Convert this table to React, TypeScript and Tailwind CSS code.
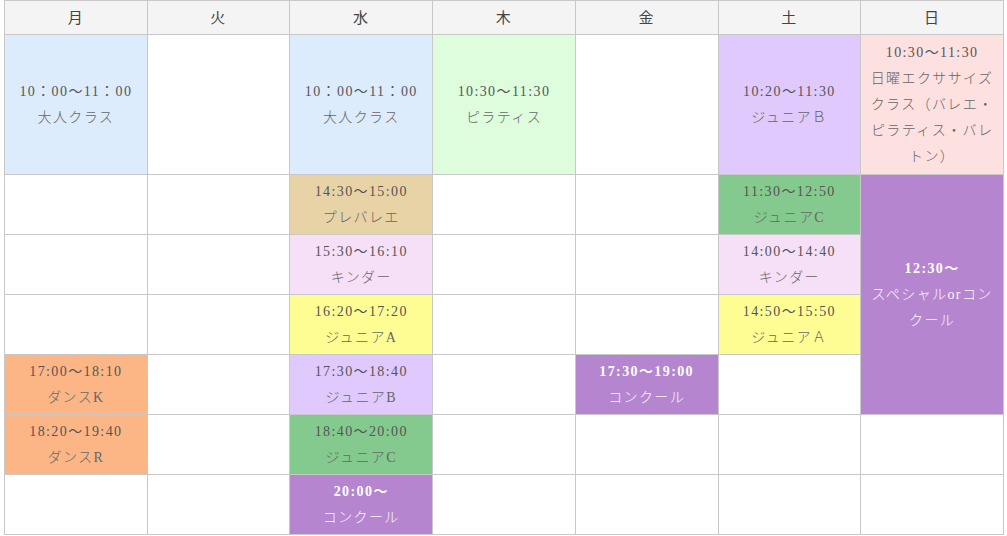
import React from "react";

type Cell = {
  time?: string;
  name?: string;
  bg?: string;
  dark?: boolean;
  rowSpan?: number;
  skip?: boolean;
};

const days = ["月", "火", "水", "木", "金", "土", "日"];

const blue = "bg-[#dcecfc]";
const mint = "bg-[#ddfddd]";
const lavender = "bg-[#e0c9fd]";
const rose = "bg-[#fde0e0]";
const tan = "bg-[#e8d3a6]";
const pink = "bg-[#f6e0f8]";
const yellow = "bg-[#fdfd94]";
const green = "bg-[#84c98d]";
const purple = "bg-[#b586cf]";
const orange = "bg-[#fcb585]";

const E: Cell = {};

const rows: Cell[][] = [
  [
    { time: "10：00〜11：00", name: "大人クラス", bg: blue },
    E,
    { time: "10：00〜11：00", name: "大人クラス", bg: blue },
    { time: "10:30〜11:30", name: "ピラティス", bg: mint },
    E,
    { time: "10:20〜11:30", name: "ジュニアＢ", bg: lavender },
    { time: "10:30〜11:30", name: "日曜エクササイズクラス（バレエ・ピラティス・バレトン）", bg: rose },
  ],
  [
    E,
    E,
    { time: "14:30〜15:00", name: "プレバレエ", bg: tan },
    E,
    E,
    { time: "11:30〜12:50", name: "ジュニアC", bg: green },
    { time: "12:30〜", name: "スペシャルorコンクール", bg: purple, dark: true, rowSpan: 4 },
  ],
  [
    E,
    E,
    { time: "15:30〜16:10", name: "キンダー", bg: pink },
    E,
    E,
    { time: "14:00〜14:40", name: "キンダー", bg: pink },
    { skip: true },
  ],
  [
    E,
    E,
    { time: "16:20〜17:20", name: "ジュニアA", bg: yellow },
    E,
    E,
    { time: "14:50〜15:50", name: "ジュニアＡ", bg: yellow },
    { skip: true },
  ],
  [
    { time: "17:00〜18:10", name: "ダンスK", bg: orange },
    E,
    { time: "17:30〜18:40", name: "ジュニアB", bg: lavender },
    E,
    { time: "17:30〜19:00", name: "コンクール", bg: purple, dark: true },
    E,
    { skip: true },
  ],
  [
    { time: "18:20〜19:40", name: "ダンスR", bg: orange },
    E,
    { time: "18:40〜20:00", name: "ジュニアC", bg: green },
    E,
    E,
    E,
    E,
  ],
  [
    E,
    E,
    { time: "20:00〜", name: "コンクール", bg: purple, dark: true },
    E,
    E,
    E,
    E,
  ],
];

export default function App() {
  return (
    <div className="bg-white pl-[4px]">
      <table
        className="w-[1000px] table-fixed border-collapse text-[14px] leading-[26px] tracking-[0.1em] text-[#555]"
        style={{ fontFamily: '"Liberation Serif", "Noto Sans CJK JP", serif' }}
      >
        <thead>
          <tr className="h-[34px]">
            {days.map((d) => (
              <th key={d} className="border border-[#c8c8c8] bg-[#f4f4f4] font-normal text-[#444] text-[15px]">
                {d}
              </th>
            ))}
          </tr>
        </thead>
        <tbody>
          {rows.map((row, i) => (
            <tr key={i} className={i === 0 ? "h-[140px]" : "h-[60px]"}>
              {row.map((c, j) =>
                c.skip ? null : (
                  <td
                    key={j}
                    rowSpan={c.rowSpan}
                    className={`border border-[#c8c8c8] px-2 py-0 text-center align-middle ${c.bg ?? "bg-white"}`}
                  >
                    {c.time && <div className={c.dark ? "font-bold text-white" : ""}>{c.time}</div>}
                    {c.name && (
                      <div className={`font-light ${c.dark ? "text-[#fbf5fd]" : "text-[#666]"}`}>{c.name}</div>
                    )}
                  </td>
                )
              )}
            </tr>
          ))}
        </tbody>
      </table>
    </div>
  );
}
